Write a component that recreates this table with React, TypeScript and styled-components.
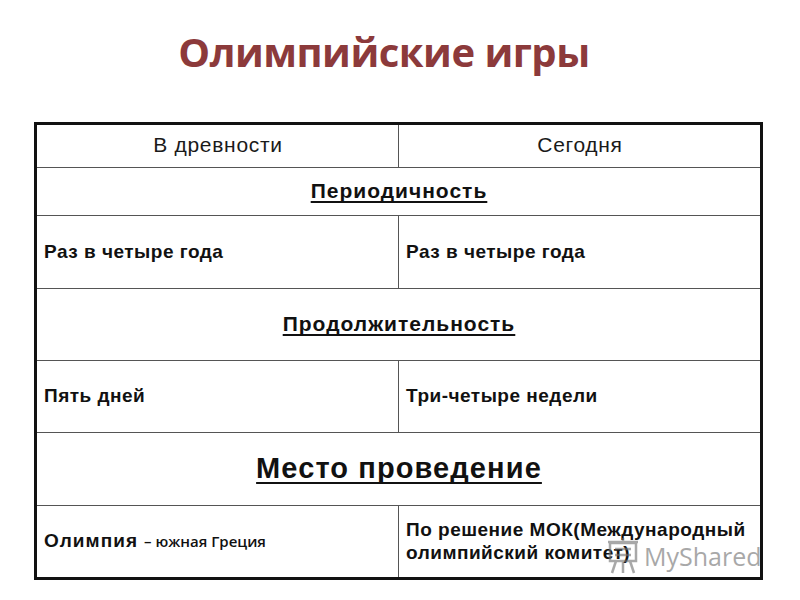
import styled, { createGlobalStyle } from 'styled-components';

const GlobalStyle = createGlobalStyle`
  html, body {
    margin: 0;
    padding: 0;
    background: #fff;
  }
  body {
    font-family: "Liberation Sans", Arial, sans-serif;
    color: #111;
  }
`;

const Page = styled.div`
  width: 800px;
  height: 600px;
  position: relative;
  overflow: hidden;
  display: flex;
  flex-direction: column;
  align-items: flex-start;
`;

const Title = styled.h1`
  margin: 26px 0 0 0;
  width: 768px;
  text-align: center;
  font-family: "Open Sans", "Noto Sans", sans-serif;
  font-weight: 700;
  font-size: 40px;
  line-height: 52px;
  letter-spacing: -0.5px;
  color: #8c3a3b;
`;

const Table = styled.table`
  margin: 44px 0 0 34px;
  width: 729px;
  border-collapse: collapse;
  border: 3px solid #111;
  table-layout: fixed;
`;

const Cell = styled.td<{ $h: number; $center?: boolean }>`
  height: ${(p) => p.$h}px;
  padding: 0 6px 2px 7px;
  border: 1.5px solid #555;
  text-align: ${(p) => (p.$center ? 'center' : 'left')};
  vertical-align: middle;
  box-sizing: border-box;
  white-space: nowrap;
`;

const HeadText = styled.span`
  font-size: 21px;
  letter-spacing: 0.7px;
  color: #1a1a1a;
`;

const Section = styled.span<{ $big?: boolean }>`
  font-size: ${(p) => (p.$big ? '29px' : '21px')};
  letter-spacing: ${(p) => (p.$big ? '1.1px' : '1px')};
  font-weight: 700;
  text-decoration: underline;
  text-decoration-skip-ink: none;
  text-underline-offset: ${(p) => (p.$big ? '4px' : '3px')};
  text-decoration-thickness: ${(p) => (p.$big ? '2px' : '1.5px')};
  color: #111;
`;

const Fact = styled.span`
  font-size: 19px;
  font-weight: 700;
  letter-spacing: 0.5px;
  line-height: 23px;
  color: #111;
`;

const Lead = styled.span`
  letter-spacing: 1.1px;
`;

const Small = styled.span`
  font-family: "Open Sans", "Noto Sans", sans-serif;
  font-size: 15px;
  font-weight: 600;
  letter-spacing: 0px;
`;

const Watermark = styled.div`
  position: absolute;
  left: 606px;
  top: 537px;
  display: flex;
  align-items: center;
  gap: 4px;
  opacity: 0.6;
  color: #6f6f6f;
  font-family: "Open Sans", "Noto Sans", sans-serif;
  font-size: 25px;
  line-height: 30px;
  pointer-events: none;
`;

function BoardIcon() {
  return (
    <svg width="34" height="38" viewBox="0 0 34 38" fill="none" stroke="#6f6f6f" strokeWidth="2.5">
      <rect x="4" y="6" width="26" height="18" />
      <line x1="2" y1="5" x2="32" y2="5" />
      <line x1="17" y1="1" x2="17" y2="5" />
      <line x1="10" y1="24" x2="6" y2="36" />
      <line x1="24" y1="24" x2="28" y2="36" />
      <line x1="17" y1="24" x2="17" y2="36" />
      <line x1="9" y1="12" x2="25" y2="12" />
      <line x1="9" y1="18" x2="25" y2="18" />
    </svg>
  );
}

const rows = [
  { left: 'Раз в четыре года', right: 'Раз в четыре года' },
  { left: 'Пять дней', right: 'Три-четыре недели' },
];

export default function App() {
  return (
    <Page>
      <GlobalStyle />
      <Title>Олимпийские игры</Title>
      <Table>
        <colgroup>
          <col style={{ width: '363px' }} />
          <col />
        </colgroup>
        <tbody>
          <tr>
            <Cell $h={44} $center>
              <HeadText>В древности</HeadText>
            </Cell>
            <Cell $h={44} $center>
              <HeadText>Сегодня</HeadText>
            </Cell>
          </tr>
          <tr>
            <Cell $h={48} $center colSpan={2}>
              <Section>Периодичность</Section>
            </Cell>
          </tr>
          <tr>
            <Cell $h={73}>
              <Fact>{rows[0].left}</Fact>
            </Cell>
            <Cell $h={73}>
              <Fact>{rows[0].right}</Fact>
            </Cell>
          </tr>
          <tr>
            <Cell $h={72} $center colSpan={2}>
              <Section>Продолжительность</Section>
            </Cell>
          </tr>
          <tr>
            <Cell $h={72}>
              <Fact>{rows[1].left}</Fact>
            </Cell>
            <Cell $h={72}>
              <Fact>{rows[1].right}</Fact>
            </Cell>
          </tr>
          <tr>
            <Cell $h={73} $center colSpan={2}>
              <Section $big>Место проведение</Section>
            </Cell>
          </tr>
          <tr>
            <Cell $h={73}>
              <Fact>
                <Lead>Олимпия</Lead> <Small>– южная Греция</Small>
              </Fact>
            </Cell>
            <Cell $h={73}>
              <Fact>
                По решение МОК(Международный
                <br />
                олимпийский комитет)
              </Fact>
            </Cell>
          </tr>
        </tbody>
      </Table>
      <Watermark>
        <BoardIcon />
        MyShared
      </Watermark>
    </Page>
  );
}
